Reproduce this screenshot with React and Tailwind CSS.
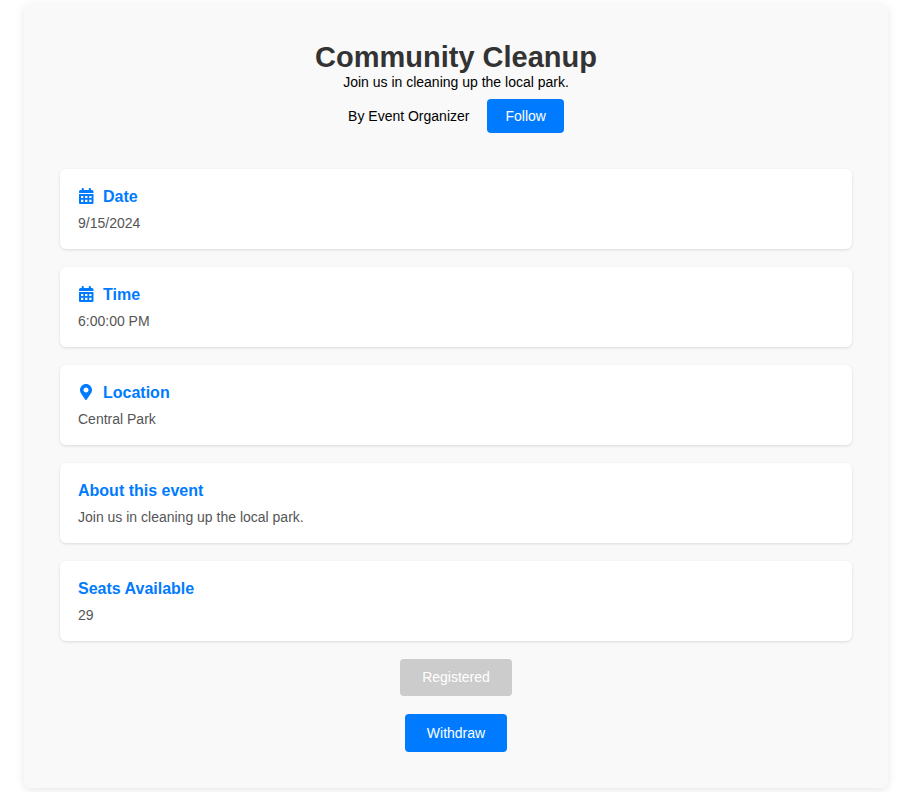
import { FaMapMarkerAlt } from "react-icons/fa";

function CalendarIcon(props) {
  return (
    <svg viewBox="0 0 16 16" fill="currentColor" {...props}>
      <path
        fillRule="evenodd"
        d="M4.500 0h.5q.8 0 .8.8V2h5V.8q0-.8.8-.8h.5q.8 0 .8.8V2H14q1.500 0 1.500 1.500V5H1V3.500Q1 2 2.500 2h1.200V.8q0-.8.8-.8ZM1 6h14.500v9q0 1-1 1H2q-1 0-1-1ZM3 8v2h2.300V8ZM7.100 8v2h2.300V8ZM11.200 8v2h2.300V8ZM3 11.700v2.300h2.300v-2.300ZM7.100 11.700v2.300h2.300v-2.300ZM11.200 11.700v2.300h2.300v-2.300Z"
      />
    </svg>
  );
}

function Card({ icon: Icon, title, children }) {
  return (
    <section className="rounded-md bg-white px-[18px] pt-4 pb-[14px] shadow-[0_1px_3px_rgba(0,0,0,0.12)]">
      <h2 className="flex items-start gap-[9px] text-base leading-6 font-bold text-[#007bff]">
        {Icon && <Icon className="mt-[3px] size-4" aria-hidden="true" />}
        {title}
      </h2>
      <p className="mt-[2px] text-sm leading-6 text-[#555]">{children}</p>
    </section>
  );
}

export default function App() {
  return (
    <div className="pt-1 pr-[14px] pb-1 pl-6 font-['Liberation_Sans',Arial,sans-serif] text-black">
      <main className="rounded-lg bg-[#f9f9f9] p-9 shadow-[0_2px_10px_rgba(0,0,0,0.1)]">
        <header className="mb-9 flex flex-col items-center">
          <h1 className="text-[29px] leading-[34px] font-bold text-[#333]">Community Cleanup</h1>
          <p className="text-sm leading-4">Join us in cleaning up the local park.</p>
          <div className="mt-[9px] flex items-center gap-[18px]">
            <p className="text-sm">By Event Organizer</p>
            <button className="h-[34px] rounded bg-[#007bff] px-[18px] text-sm text-white">Follow</button>
          </div>
        </header>
        <div className="flex flex-col gap-[18px]">
          <Card icon={CalendarIcon} title="Date">9/15/2024</Card>
          <Card icon={CalendarIcon} title="Time">6:00:00 PM</Card>
          <Card icon={FaMapMarkerAlt} title="Location">Central Park</Card>
          <Card title="About this event">Join us in cleaning up the local park.</Card>
          <Card title="Seats Available">29</Card>
        </div>
        <div className="mt-[18px] flex flex-col items-center gap-[18px]">
          <button className="h-[37px] rounded bg-[#ccc] px-[22px] pb-[2px] text-sm text-white" disabled>Registered</button>
          <button className="h-[38px] rounded bg-[#007bff] px-[22px] text-sm text-white">Withdraw</button>
        </div>
      </main>
    </div>
  );
}
